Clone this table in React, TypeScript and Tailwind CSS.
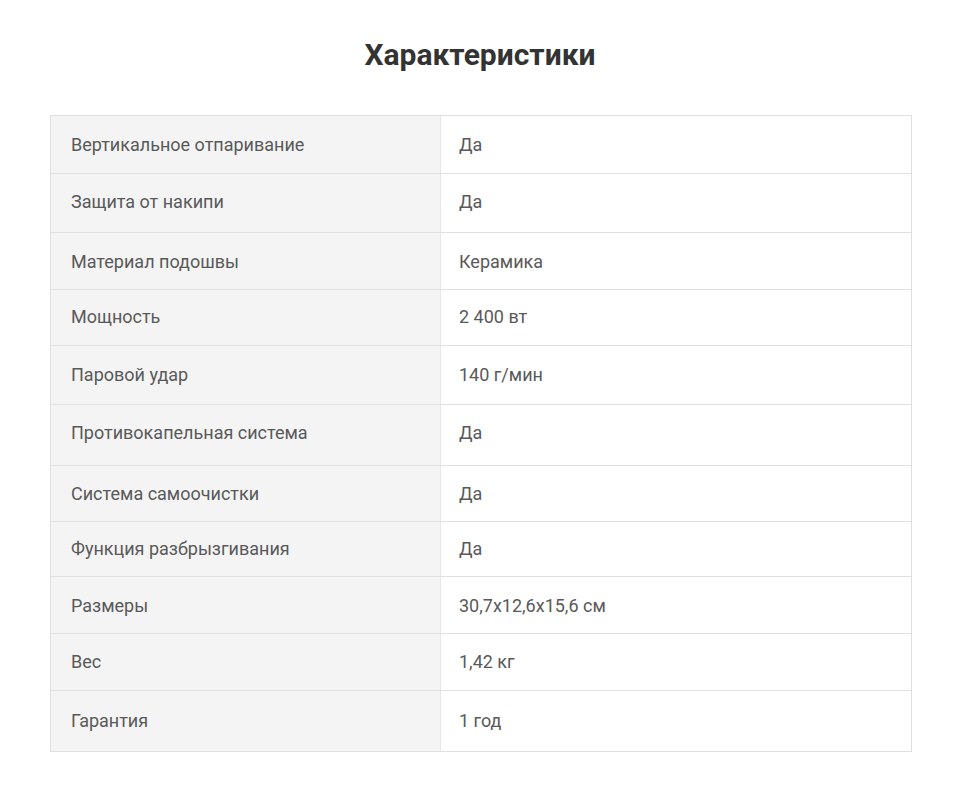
const rows: { label: string; value: string; h: string; pb: string }[] = [
  { label: "Вертикальное отпаривание", value: "Да", h: "h-[57px]", pb: "" },
  { label: "Защита от накипи", value: "Да", h: "h-[59px]", pb: "pb-[3px]" },
  { label: "Материал подошвы", value: "Керамика", h: "h-[57px]", pb: "" },
  { label: "Мощность", value: "2 400 вт", h: "h-[56px]", pb: "pb-[2px]" },
  { label: "Паровой удар", value: "140 г/мин", h: "h-[59px]", pb: "pb-[2px]" },
  { label: "Противокапельная система", value: "Да", h: "h-[61px]", pb: "pb-[5px]" },
  { label: "Система самоочистки", value: "Да", h: "h-[56px]", pb: "" },
  { label: "Функция разбрызгивания", value: "Да", h: "h-[55px]", pb: "pb-[2px]" },
  { label: "Размеры", value: "30,7x12,6x15,6 см", h: "h-[57px]", pb: "" },
  { label: "Вес", value: "1,42 кг", h: "h-[57px]", pb: "pb-[2px]" },
  { label: "Гарантия", value: "1 год", h: "h-[61px]", pb: "pb-[2px]" },
];

export default function App() {
  return (
    <div className="w-[960px] h-[806px] bg-white font-['Roboto',sans-serif] pt-[35px]">
      <h2 className="text-center text-[30px] leading-[40px] font-bold text-[#333]">Характеристики</h2>
      <div className="mx-[50px] mt-[40px] w-[862px] border border-[#e0e0e0]">
        {rows.map((r, i) => (
          <div key={r.label} className={`flex ${r.h} ${i > 0 ? "border-t border-[#e0e0e0]" : ""}`}>
            <div className={`w-[390px] bg-[#f4f4f4] border-r border-[#e6e6e6] flex items-center pl-[20px] ${r.pb} text-[18px] text-[#595959]`}>
              {r.label}
            </div>
            <div className={`flex-1 flex items-center pl-[18px] ${r.pb} text-[18px] text-[#595959]`}>{r.value}</div>
          </div>
        ))}
      </div>
    </div>
  );
}
